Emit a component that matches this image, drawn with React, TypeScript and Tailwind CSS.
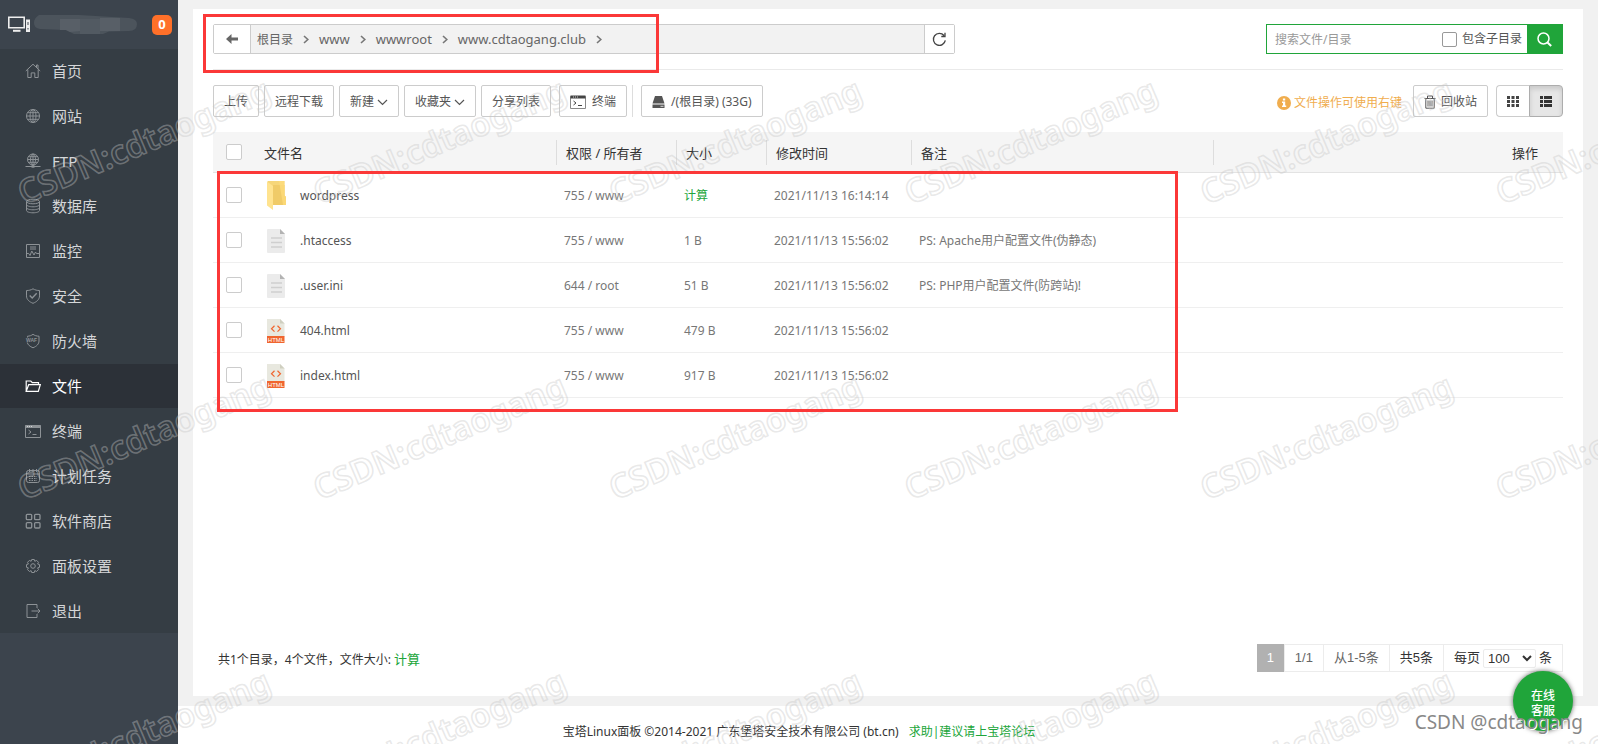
import type { ReactNode } from "react";

const iconProps = {
    width: 16,
    height: 16,
    viewBox: "0 0 16 16",
    fill: "none",
    stroke: "currentColor",
    strokeWidth: 1,
    "aria-hidden": true,
} as const;

const HomeIcon = () => (
    <svg {...iconProps}>
        <path d="M.8 8 8 1.2 15.2 8M2.8 6.5v8h3.4v-4.6h3.6v4.6h3.4v-8M11.5 4.3V2h1.5v3.8" />
    </svg>
);

const GlobeIcon = () => (
    <svg {...iconProps}>
        <circle cx="8" cy="8" r="6.5" />
        <ellipse cx="8" cy="8" rx="3" ry="6.5" />
        <path d="M8 1.5v13M1.5 8h13M2.6 4.7h10.8M2.6 11.3h10.8" />
    </svg>
);

const FtpIcon = () => (
    <svg {...iconProps}>
        <circle cx="8" cy="6.5" r="5.5" />
        <ellipse cx="8" cy="6.5" rx="2.5" ry="5.5" />
        <path d="M8 1v13M2.5 6.5h11M3.4 3.7h9.2M3.4 9.3h9.2M.5 13.5h15" />
        <path d="M6.5 13.5h3" strokeWidth="2.4" />
    </svg>
);

const DatabaseIcon = () => (
    <svg {...iconProps}>
        <ellipse cx="8" cy="3.5" rx="6.5" ry="2.3" />
        <path d="M1.5 3.5v9c0 1.3 2.9 2.3 6.5 2.3s6.5-1 6.5-2.3v-9M1.5 6.5c0 1.3 2.9 2.3 6.5 2.3s6.5-1 6.5-2.3M1.5 9.5c0 1.3 2.9 2.3 6.5 2.3s6.5-1 6.5-2.3" />
    </svg>
);

const MonitorIcon = () => (
    <svg {...iconProps}>
        <path d="M1.5 1.5h13v13h-13zM1.5 10.5h2.2l1.3 2 1.8-4.5L9 12l1.5-3 1 1.5h3M5 4h6M5 6h6" />
    </svg>
);

const ShieldIcon = () => (
    <svg {...iconProps}>
        <path d="M8 .8c2 1.3 4.2 1.7 6.5 1.7v5.4c0 3.5-2.7 5.9-6.5 7.4-3.8-1.5-6.5-3.9-6.5-7.4V2.5C3.8 2.5 6 2.1 8 .8z" />
        <path d="m4.7 7.5 2.5 2.5 4.5-4.7" strokeWidth="1.4" />
    </svg>
);

const WafIcon = () => (
    <svg {...iconProps}>
        <path d="M2.5 4.5V3.2C4.5 3.2 6.5 2.5 8 1.3c1.5 1.2 3.7 1.9 6 1.9V8c0 3-2.3 5.3-6 6.8-3.1-1.3-5.2-3-5.7-5.3" />
        <text x="1" y="8.8" fontSize="5" fontWeight="700" fontFamily="Liberation Sans, sans-serif" fill="currentColor" stroke="none">
            WAF
        </text>
    </svg>
);

const FolderOpenIcon = () => (
    <svg {...iconProps} strokeWidth="1.2">
        <path d="M1.2 13.3V3h4.6l1.5 1.7h6.2v2M1.2 13.3 3.7 6.7h11.6l-2 6.6z" />
    </svg>
);

const TerminalIcon = () => (
    <svg {...iconProps}>
        <path d="M.5 2.5h15v12H.5z" />
        <path d="M.5 2h15v3H.5z" fill="currentColor" stroke="none" />
        <path d="m3.5 7 2.5 2-2.5 2M7.5 11.5h4" />
        <path d="M2 3.5h1M4 3.5h1M6 3.5h1" stroke="white" strokeOpacity=".6" />
    </svg>
);

const CalendarIcon = () => (
    <svg {...iconProps}>
        <rect x="1.5" y="2.5" width="13" height="12" rx="2" />
        <path d="M1.5 6h13M4.5 1v3M8 1v3M11.5 1v3" />
        <path d="M4 8.5h8M4 10.5h8M4 12.5h8" strokeDasharray="1.5 1" />
    </svg>
);

const AppsIcon = () => (
    <svg {...iconProps} strokeWidth="1.3">
        <rect x="1.3" y="1.3" width="5.4" height="5.4" rx="1" />
        <rect x="9.6" y="1.3" width="5.4" height="5.4" rx="1" />
        <rect x="1.3" y="9.6" width="5.4" height="5.4" rx="1" />
        <rect x="9.6" y="9.6" width="5.4" height="5.4" rx="1" />
    </svg>
);

const GearIcon = () => (
    <svg {...iconProps}>
        <path d="M6.7 1.5h2.6l.5 1.8 1.8-.9 1.9 1.9-.9 1.7 1.9.6v2.7l-1.9.6.9 1.7-1.9 1.9-1.8-.9-.5 1.9H6.7l-.6-1.9-1.7.9-1.9-1.9.9-1.7-1.9-.6V6.6L3.400 6l-.9-1.7 1.900-1.900 1.700.9z" />
        <circle cx="8" cy="8" r="2.3" />
    </svg>
);

const LogoutIcon = () => (
    <svg {...iconProps}>
        <path d="M12 5V1.5H2v13h10V11M6.5 8H15M12.7 5.7 15 8l-2.3 2.3" />
    </svg>
);

const ChevronDown = () => (
    <svg width="11" height="7" viewBox="0 0 11 7" fill="none" stroke="currentColor" strokeWidth="1.2" aria-hidden>
        <path d="m1 1 4.5 4.5L10 1" />
    </svg>
);

const ChevronRight = () => (
    <svg width="6" height="9" viewBox="0 0 6 9" fill="none" stroke="#777" strokeWidth="1.6" aria-hidden>
        <path d="m1 1 3.8 3.5L1 8" />
    </svg>
);

const FolderFileIcon = () => (
    <svg width="20" height="29" viewBox="0 0 20 29" aria-hidden>
        <path d="M.5 0h17v14.5l1.5 1.5v8H5z" fill="#f6d679" />
        <path d="M6 4h11.5v10.5L19 16v8H6z" fill="#f0cb68" />
        <path d="M12 0h5.5v14.5L19 16v8h-3z" fill="#ffdd7c" opacity=".7" />
        <path d="M0 .5 6 5v24L0 24.5z" fill="#ffe38f" />
    </svg>
);

const TextFileIcon = () => (
    <svg width="18" height="24" viewBox="0 0 18 24" aria-hidden>
        <path d="M1 0h12l5 5v18a1 1 0 0 1-1 1H1a1 1 0 0 1-1-1V1a1 1 0 0 1 1-1z" fill="#ebebeb" />
        <path d="M13 0v5h5z" fill="#b3b3b3" />
        <path d="M4 9h11M4 13.5h11M4 18h11" stroke="#cfcfcf" strokeWidth="1.4" />
    </svg>
);

const HtmlFileIcon = () => (
    <svg width="18" height="24" viewBox="0 0 18 24" aria-hidden>
        <path d="M0 0h13l4.5 4.5V18H0z" fill="#e8e8df" />
        <path d="M13 0v4.5h4.5z" fill="#cfcfc0" />
        <path d="M7.5 6.8 4.5 9.7l3 2.9M10.5 6.8l3 2.9-3 2.9" fill="none" stroke="#f0652f" strokeWidth="1.2" />
        <path d="M0 17h17.5v7H0z" fill="#f0652f" />
        <text x="9" y="22.8" textAnchor="middle" fontSize="6" fontFamily="Liberation Sans, sans-serif" fill="white">
            HTML
        </text>
    </svg>
);

const menu: { label: string; icon: ReactNode; active?: boolean }[] = [
    { label: "首页", icon: <HomeIcon /> },
    { label: "网站", icon: <GlobeIcon /> },
    { label: "FTP", icon: <FtpIcon /> },
    { label: "数据库", icon: <DatabaseIcon /> },
    { label: "监控", icon: <MonitorIcon /> },
    { label: "安全", icon: <ShieldIcon /> },
    { label: "防火墙", icon: <WafIcon /> },
    { label: "文件", icon: <FolderOpenIcon />, active: true },
    { label: "终端", icon: <TerminalIcon /> },
    { label: "计划任务", icon: <CalendarIcon /> },
    { label: "软件商店", icon: <AppsIcon /> },
    { label: "面板设置", icon: <GearIcon /> },
    { label: "退出", icon: <LogoutIcon /> },
];

const files = [
    { name: "wordpress", icon: <FolderFileIcon />, owner: "755 / www", size: "", time: "2021/11/13 16:14:14", note: "" },
    { name: ".htaccess", icon: <TextFileIcon />, owner: "755 / www", size: "1 B", time: "2021/11/13 15:56:02", note: "PS: Apache用户配置文件(伪静态)" },
    { name: ".user.ini", icon: <TextFileIcon />, owner: "644 / root", size: "51 B", time: "2021/11/13 15:56:02", note: "PS: PHP用户配置文件(防跨站)!" },
    { name: "404.html", icon: <HtmlFileIcon />, owner: "755 / www", size: "479 B", time: "2021/11/13 15:56:02", note: "" },
    { name: "index.html", icon: <HtmlFileIcon />, owner: "755 / www", size: "917 B", time: "2021/11/13 15:56:02", note: "" },
];

const crumbs = ["根目录", "www", "wwwroot", "www.cdtaogang.club"];

const columns = ["权限 / 所有者", "大小", "修改时间", "备注"];

function Sidebar() {
    return (
        <aside className="w-[178px] shrink-0 bg-[#3c444d]">
            <div className="flex h-[49px] items-center pl-2 pr-1.5">
                <svg width="23" height="17" viewBox="0 0 23 17" fill="none" stroke="#eee" aria-hidden>
                    <path d="M.8 1.3h15.4v10.4H.8z" strokeWidth="1.6" />
                    <path d="M5 14.8h7.5" strokeWidth="2" />
                    <path d="M18 3.5h4V16h-4z" fill="#eee" stroke="none" />
                    <path d="M20 6v3M20 12v1.5" stroke="#3c444d" />
                </svg>
                <svg width="104" height="21" viewBox="0 0 104 21" className="ml-[3px]" aria-hidden>
                    <path d="M5 1h40l50 3q8 1 8 6 0 7-8 7l-20 .5-6 2.5H40l-8-4-26-1Q0 14 0 9t5-8z" fill="#4c545c" />
                    <path d="M26 5h20v12l-10 1-4-2h-6zM66 4h20v13H66z" fill="#585f67" />
                    <path d="M46 5h20v15H46z" fill="#525a62" />
                </svg>
                <span className="ml-auto flex size-5 items-center justify-center rounded-[5px] bg-[#ff7029] text-[13px] font-bold text-white">0</span>
            </div>
            <nav className="flex flex-col gap-px bg-[#353d44]">
                {menu.map((item) => (
                    <a
                        key={item.label}
                        href="#"
                        className={
                            item.active
                                ? "flex h-11 items-center gap-[11px] bg-[#2c3138] pl-[25px] text-[15px] text-white"
                                : "flex h-11 items-center gap-[11px] pl-[25px] text-[15px] text-[#d5d7d9]"
                        }
                    >
                        <span className={item.active ? "text-white" : "text-[#8d9296]"}>{item.icon}</span>
                        {item.label}
                    </a>
                ))}
            </nav>
        </aside>
    );
}

function PathBar() {
    return (
        <div className="flex justify-between border-b border-[#eaeaea] pb-[15px]">
            <div className="flex h-[30px] w-[742px] rounded-xs border border-[#ccc] bg-[#f2f2f2]">
                <button type="button" aria-label="返回" className="flex w-[37px] items-center justify-center border-r border-[#ccc] bg-white">
                    <svg width="12" height="10" viewBox="0 0 12 10" fill="#666" aria-hidden>
                        <path d="M0 5 5.5 0v3.5H12v3H5.5V10z" />
                    </svg>
                </button>
                <div className="flex flex-1 items-center pl-1.5 pt-px text-[13px] text-[#666]">
                    {crumbs.map((crumb, i) => (
                        <span key={crumb} className="flex items-center">
                            <a href="#" className={i === 0 ? "text-xs" : ""}>
                                {crumb}
                            </a>
                            <span className="px-2.5">
                                <ChevronRight />
                            </span>
                        </span>
                    ))}
                </div>
                <button type="button" aria-label="刷新" className="flex w-[30px] items-center justify-center border-l border-[#ccc] bg-white">
                    <svg width="15" height="15" viewBox="0 0 15 15" fill="none" stroke="#444" strokeWidth="1.3" aria-hidden>
                        <path d="M13.3 8.3A6 6 0 1 1 12 3.5M13 .8v3.7H9.3" />
                    </svg>
                </button>
            </div>
            <form className="flex h-[30px] w-[297px] border border-[#20a53a]">
                <input
                    type="text"
                    aria-label="搜索文件/目录"
                    placeholder="搜索文件/目录"
                    className="min-w-0 flex-1 pl-2 pt-0.5 text-xs placeholder:text-[#999]"
                />
                <label className="flex items-center gap-[5px] pr-[5px] text-xs text-[#555]">
                    <input type="checkbox" className="size-[15px] appearance-none rounded-xs border border-[#999] bg-white" />
                    包含子目录
                </label>
                <button type="button" aria-label="搜索" className="flex w-[35px] items-center justify-center bg-[#20a53a]">
                    <svg width="15" height="15" viewBox="0 0 15 15" fill="none" stroke="white" strokeWidth="1.5" aria-hidden>
                        <circle cx="6.5" cy="6.5" r="5.5" />
                        <path d="m10.5 10.5 3.7 3.5" strokeWidth="2" />
                    </svg>
                </button>
            </form>
        </div>
    );
}

function ToolButton({ children }: { children: ReactNode }) {
    return (
        <button type="button" className="flex h-8 items-center rounded-xs border border-[#ccc] bg-white px-2.5 pt-0.5 text-xs text-[#555]">
            {children}
        </button>
    );
}

function Toolbar() {
    return (
        <div className="flex items-center justify-between py-[15px]">
            <div className="flex items-center gap-[5px]">
                <ToolButton>上传</ToolButton>
                <ToolButton>远程下载</ToolButton>
                <ToolButton>
                    <span className="pr-[3px]">新建</span>
                    <ChevronDown />
                </ToolButton>
                <ToolButton>
                    <span className="pr-[3px]">收藏夹</span>
                    <ChevronDown />
                </ToolButton>
                <ToolButton>分享列表</ToolButton>
                <div className="flex items-center gap-[5px] border-r border-[#ddd] pl-[3px] pr-[5px]">
                    <ToolButton>
                        <svg width="16" height="14" viewBox="0 0 16 14" fill="none" stroke="#444" aria-hidden>
                            <path d="M.5 1.5h15v12H.5z" stroke="#888" />
                            <path d="M.5 2h15" strokeWidth="3" />
                            <path d="M3 2h1M5 2h1M7 2h1" stroke="#ccc" />
                            <path d="m3.5 6 2.5 2-2.5 2M8 10.5h4" />
                        </svg>
                        <span className="pl-1.5">终端</span>
                    </ToolButton>
                </div>
                <div className="pl-[3px]">
                    <ToolButton>
                        <svg width="13" height="12" viewBox="0 0 13 12" aria-hidden>
                            <path d="M3 0h7l2.5 7.5H.5z" fill="#555" />
                            <path d="M.5 8.5h12V12H.5z" fill="#555" />
                            <path d="M8.5 10.3h3" stroke="#ddd" />
                        </svg>
                        <span className="pl-1.5">/(根目录) (33G)</span>
                    </ToolButton>
                </div>
            </div>
            <div className="flex items-center">
                <span className="flex items-center gap-[3px] pr-[11px] pt-[3px] text-xs text-[#f0ad4e]">
                    <svg width="14" height="14" viewBox="0 0 14 14" aria-hidden>
                        <circle cx="7" cy="7" r="7" fill="#f0ad4e" />
                        <path d="M5 5.5h3.2v4h1V11H5V9.500h1V7H5zM5.900 2.500h2.300v2H5.900z" fill="white" />
                    </svg>
                    文件操作可使用右键
                </span>
                <ToolButton>
                    <svg width="12" height="14" viewBox="0 0 12 14" fill="none" stroke="#555" aria-hidden>
                        <path d="M.5 3.5h11M3.5 3V1h5v2M1.8 3.5v9.7h8.4V3.5M4 5.5v6M6 5.5v6M8 5.5v6" />
                    </svg>
                    <span className="pl-[5px]">回收站</span>
                </ToolButton>
                <div className="ml-2 flex h-8 w-[67px]">
                    <button type="button" aria-label="图标" className="flex flex-1 items-center justify-center rounded-l border border-r-0 border-[#ccc] bg-white">
                        <svg width="12" height="11" viewBox="0 0 12 11" fill="#444" aria-hidden>
                            <path d="M0 0h3v3H0zM4.5 0h3v3h-3zM9 0h3v3H9zM0 4h3v3H0zM4.5 4h3v3h-3zM9 4h3v3H9zM0 8h3v3H0zM4.5 8h3v3h-3zM9 8h3v3H9z" />
                        </svg>
                    </button>
                    <button
                        type="button"
                        aria-label="列表"
                        className="flex flex-1 items-center justify-center rounded-r border border-[#adadad] bg-[#e6e6e6] shadow-[inset_0_3px_5px_rgba(0,0,0,0.125)]"
                    >
                        <svg width="12" height="11" viewBox="0 0 12 11" fill="#333" aria-hidden>
                            <path d="M0 0h3v3H0zM4 0h8v3H4zM0 4h3v3H0zM4 4h8v3H4zM0 8h3v3H0zM4 8h8v3H4z" />
                        </svg>
                    </button>
                </div>
            </div>
        </div>
    );
}

function Check({ label }: { label: string }) {
    return <input type="checkbox" aria-label={label} className="block size-4 appearance-none rounded-xs border border-[#ccc] bg-white" />;
}

function FileTable() {
    return (
        <table className="w-full table-fixed text-left">
            <colgroup>
                <col className="w-[41px]" />
                <col className="w-[302px]" />
                <col className="w-[120px]" />
                <col className="w-[90px]" />
                <col className="w-[145px]" />
                <col className="w-[302px]" />
                <col />
            </colgroup>
            <thead>
                <tr className="h-10 border-b border-[#e3e3e3] bg-[#f5f5f5] text-[13px] text-[#333]">
                    <th className="pl-[13px]">
                        <Check label="全选" />
                    </th>
                    <th className="pl-2.5 pt-1 font-normal">文件名</th>
                    {columns.map((column) => (
                        <th key={column} className="pt-px font-normal">
                            <div className="flex h-[25px] items-center border-l border-[#ddd] pl-[9px] pt-[3px]">{column}</div>
                        </th>
                    ))}
                    <th className="pt-px font-normal">
                        <div className="flex h-[25px] items-center justify-end border-l border-[#ddd] pr-[25px] pt-[3px]">操作</div>
                    </th>
                </tr>
            </thead>
            <tbody>
                {files.map((file) => (
                    <tr key={file.name} className="h-[45px] border-b border-[#efefef] text-xs text-[#777]">
                        <td className="pl-[13px]">
                            <Check label={file.name} />
                        </td>
                        <td className="pl-[13px] pt-0.5">
                            <a href="#" className="flex items-center text-xs text-[#555]">
                                <span className="w-[33px]">{file.icon}</span>
                                {file.name}
                            </a>
                        </td>
                        <td className="pl-2 pt-0.5">{file.owner}</td>
                        <td className="pl-2 pt-0.5">
                            {file.size || (
                                <a href="#" className="text-[#20a53a]">
                                    计算
                                </a>
                            )}
                        </td>
                        <td className="pl-2 pt-0.5">{file.time}</td>
                        <td className="pl-2 pt-0.5">{file.note}</td>
                        <td />
                    </tr>
                ))}
            </tbody>
        </table>
    );
}

function Pager() {
    return (
        <div className="mt-auto flex items-center justify-between">
            <p className="pl-[5px] pt-1 text-xs text-[#333]">
                共1个目录，4个文件，文件大小:{" "}
                <a href="#" className="text-[13px] text-[#20a53a]">
                    计算
                </a>
            </p>
            <div className="flex h-7 divide-x divide-[#ececec] border border-[#ececec] font-['Liberation_Sans','Noto_Sans_CJK_SC',sans-serif] text-[13px] text-[#333]">
                <span className="-my-px -ml-px flex w-7 items-center justify-center bg-[#b1b1b1] text-white">1</span>
                <span className="flex items-center px-2.5 text-[#666]">1/1</span>
                <span className="flex items-center px-2.5 text-[#666]">从1-5条</span>
                <span className="flex items-center px-2.5">共5条</span>
                <label className="flex items-center gap-[3px] px-2.5">
                    每页
                    <select className="h-[19px] w-[53px] rounded-xs border border-[#ececec] bg-white" defaultValue="100">
                        <option>100</option>
                        <option>200</option>
                    </select>
                    条
                </label>
            </div>
        </div>
    );
}

// outlined text repeated over the whole page, one tile every 295px
function Watermark() {
    const rows = [0, 1, 2];
    const cols = [0, 1, 2, 3, 4, 5];
    return (
        <svg className="pointer-events-none absolute inset-0 size-full" aria-hidden>
            <g
                fill="none"
                stroke="#c6c6c6"
                strokeOpacity=".4"
                strokeWidth="1.5"
                fontSize="33"
                fontWeight="600"
                fontFamily="Noto Sans, sans-serif"
            >
                {rows.map((row) =>
                    cols.map((col) => (
                        <text key={`${row}-${col}`} transform={`translate(${24 + col * 295.6} ${205 + row * 295.6}) rotate(-23)`}>
                            CSDN:cdtaogang
                        </text>
                    ))
                )}
            </g>
        </svg>
    );
}

export default function App() {
    return (
        <div className="relative flex min-h-screen overflow-hidden bg-[#f1f1f1] font-['Noto_Sans','Noto_Sans_CJK_SC',sans-serif]">
            <Sidebar />
            <div className="flex min-w-0 flex-1 flex-col">
                <main className="mx-[15px] mb-2.5 mt-[9px] flex flex-1 flex-col bg-white px-5 pb-6 pt-[15px]">
                    <PathBar />
                    <Toolbar />
                    <FileTable />
                    <Pager />
                </main>
                <footer className="flex h-[38px] items-center justify-center gap-2.5 bg-white pr-[178px] pt-3.5 text-xs text-[#333]">
                    <span>宝塔Linux面板 ©2014-2021 广东堡塔安全技术有限公司 (bt.cn)</span>
                    <a href="#" className="text-[#20a53a]">
                        求助|建议请上宝塔论坛
                    </a>
                </footer>
            </div>

            <Watermark />

            {/* highlighted areas */}
            <div className="pointer-events-none absolute left-[203px] top-3.5 h-[59px] w-[456px] border-3 border-[#fb3838]" />
            <div className="pointer-events-none absolute left-[217px] top-[171px] h-[241px] w-[961px] border-3 border-[#fb3838]" />

            <button
                type="button"
                className="absolute bottom-[13px] right-[25px] size-[60px] rounded-full bg-[#20a53a] px-4 pt-1 text-xs leading-[15px] font-medium text-white shadow-[0_0_5px_rgba(0,0,0,0.6)]"
            >
                在线客服
            </button>
            <span className="pointer-events-none absolute bottom-2 right-[15px] font-['Noto_Sans',sans-serif] text-[19px] leading-7 text-[#888] [text-shadow:1px_1px_0_#fff]">
                CSDN @cdtaogang
            </span>
        </div>
    );
}
